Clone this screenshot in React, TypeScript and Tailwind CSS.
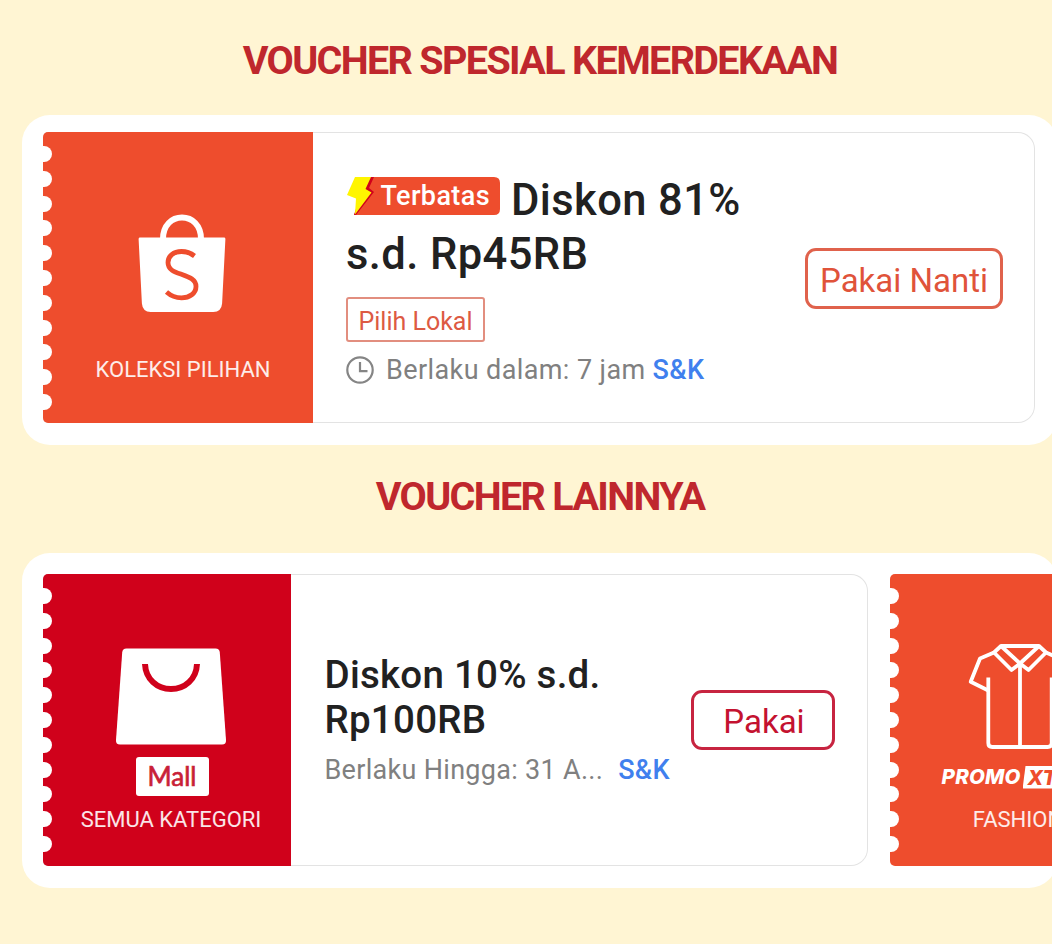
import type { ReactNode } from "react"
import { clsx } from "clsx"

interface TicketStubProps {
  className?: string
  children: ReactNode
}

function SectionTitle({ className, children }: { className?: string; children: ReactNode }) {
  return (
    <h2
      className={clsx(
        "pl-[28px] text-center text-[39.5px] leading-[48px] font-bold whitespace-nowrap text-[#bf272d]",
        className,
      )}
    >
      {children}
    </h2>
  )
}

// Coloured left side of a voucher, with the perforated edge
function TicketStub({ className, children }: TicketStubProps) {
  return (
    <div className={clsx("relative shrink-0 rounded-l-[5px] pl-[9px]", className)}>
      <div className="absolute top-[14px] -left-px flex flex-col gap-[8.8px]">
        {Array.from({ length: 11 }).map((_, i) => (
          <div key={i} className="h-4 w-[9.5px] rounded-r-full bg-white" />
        ))}
      </div>
      <div className="flex h-full flex-col items-center">{children}</div>
    </div>
  )
}

function StubLabel({ className, children }: { className?: string; children: ReactNode }) {
  return <div className={clsx("text-[22px] leading-7 whitespace-nowrap text-white/90", className)}>{children}</div>
}

function ShopeeBag() {
  return (
    <svg className="mt-[81px] mr-px h-[100px] w-[88px] shrink-0" viewBox="0 0 88 100" fill="none">
      <path d="M25 26C25 12 34 4.500 44 4.500s19 7.500 19 21.500" stroke="#fff" strokeWidth="6" />
      <path
        d="M2 24.5h84q1.500 0 1.400 1.600l-3.300 64.500q-.7 8.400-8.800 8.400H12.700q-8.100 0-8.800-8.400L.6 26.100Q.5 24.500 2 24.500Z"
        fill="#fff"
      />
      <path
        d="M56.500 43C52 39.500 47.500 38.500 43.500 38.500C35.500 38.500 30 43 30 49.500C30 57.500 38 59.500 44 61.500C51 64 58 66.500 58 73.500C58 80.500 51.500 84.800 43.500 84.800C37.500 84.800 32.500 82.500 28.500 79"
        stroke="#ee4d2d"
        strokeWidth="4.800"
      />
    </svg>
  )
}

function MallBag() {
  return (
    <svg className="mt-[74px] mr-px h-[97px] w-[112px] shrink-0" viewBox="0 0 112 97" fill="none">
      <path
        d="M11.500 .5h89q4 0 4.300 4l6.200 87.500q.3 4.500-4 4.500H5q-4.300 0-4-4.500L7.200 4.500q.3-4 4.300-4Z"
        fill="#fff"
      />
      <path d="M30 16c.6 15 12 25 26 25s25.400-10 26-25" stroke="#d0011b" strokeWidth="6" />
    </svg>
  )
}

function Shirt() {
  return (
    <svg
      className="mt-[69px] ml-[3px] h-[108px] w-[106px] shrink-0"
      viewBox="0 0 106 108"
      fill="none"
      stroke="#fff"
      strokeWidth="3.800"
      strokeLinejoin="round"
    >
      <path d="M34 3H72L79 9.500 61.500 27 53 20.500 44.500 27 27 9.500Z" />
      <path d="M34 3L53 20.500 72 3" />
      <path d="M53 20.500V104" />
      <path d="M27 9.500L13 15.500 3.700 38.700 21.300 47.500" />
      <path d="M79 9.500L93 15.500 102.300 38.700 84.700 47.500" />
      <path d="M21.300 34.500V100Q21.300 104 25.300 104H80.700Q84.700 104 84.700 100V34.500" />
    </svg>
  )
}

function LimitedBadge() {
  return (
    <span className="relative mr-[11px] inline-flex h-[38px] w-[154px] items-center justify-end rounded-r-[6px] pr-[10px] align-[10px]">
      <svg className="absolute inset-0 h-full w-full" viewBox="0 0 154 38">
        <path d="M20 0H148Q154 0 154 6V32Q154 38 148 38H8Z" fill="#ee4d2d" />
        <path d="M23 0H28L23 11 28 15 10 38H8Z" fill="#d0011b" />
        <path d="M9 0H25L19.500 12 25.500 15.500 9 37.500 10 21.500 1 18Z" fill="#fff500" />
      </svg>
      <span className="relative text-[27px] leading-[38px] font-medium tracking-[0.4px] text-white">Terbatas</span>
    </span>
  )
}

function ClockIcon() {
  return (
    <svg className="mr-3 h-7 w-7 shrink-0" viewBox="0 0 28 28" fill="none" stroke="#858585" strokeWidth="2.200">
      <circle cx="14" cy="14" r="12.700" />
      <path d="M14 6V15.200H21.500" />
    </svg>
  )
}

export default function App() {
  return (
    <div className="h-[944px] w-[1052px] overflow-hidden bg-[#fff5d3] font-[Roboto,sans-serif]">
      <SectionTitle className="pt-[37px] tracking-[-1.65px]">VOUCHER SPESIAL KEMERDEKAAN</SectionTitle>

      {/* Independence day voucher */}
      <section className="mt-[30px] ml-[22px] h-[330px] w-[1035px] rounded-[28px] bg-white pt-[17px] pl-[21px]">
        <div className="flex h-[291px] w-[992px] rounded-l-[5px] rounded-r-[17px] border border-l-0 border-[#e3e3e3]">
          <TicketStub className="-my-px w-[270px] bg-[#ee4d2d]">
            <ShopeeBag />
            <StubLabel className="mt-[43px] pl-px">KOLEKSI PILIHAN</StubLabel>
          </TicketStub>
          <div className="w-[470px] shrink-0 pt-[41px] pl-[33px]">
            <div className="text-[43.5px] leading-[54px] font-medium tracking-[0.4px] whitespace-nowrap text-[#212121]">
              <LimitedBadge />
              Diskon 81%
              <br />
              s.d. Rp45RB
            </div>
            <div className="mt-[15px] flex h-[45px] w-[139px] items-center justify-center rounded-[3px] border-2 border-[#e28e7f] pt-[4px] text-[25px] text-[#dd5a43]">
              Pilih Lokal
            </div>
            <div className="mt-3 flex h-8 items-center text-[27px] tracking-[0.4px] whitespace-nowrap text-[#808080]">
              <ClockIcon />
              Berlaku dalam: 7 jam
              <span className="ml-[7px] font-medium text-[#4080ee]">S&amp;K</span>
            </div>
          </div>
          <button className="mt-[115px] ml-[22px] h-[61px] w-[198px] shrink-0 rounded-[11px] border-3 border-[#e0624c] pt-[4px] text-[33px] text-[#e0533a]">
            Pakai Nanti
          </button>
        </div>
      </section>

      <SectionTitle className="pt-[28px] tracking-[-1.65px]">VOUCHER LAINNYA</SectionTitle>

      <section className="mt-[32px] ml-[22px] flex h-[335px] w-[1035px] gap-[22px] overflow-hidden rounded-[28px] bg-white pt-[21px] pl-[21px]">
        <div className="flex h-[292px] w-[825px] shrink-0 rounded-l-[5px] rounded-r-[17px] border border-l-0 border-[#e3e3e3]">
          <TicketStub className="-my-px w-[248px] bg-[#d0011b]">
            <MallBag />
            <div className="mt-[12px] ml-px flex h-[39px] w-[73px] shrink-0 items-center justify-center rounded-[3px] bg-white font-[Lato,sans-serif] text-[26px] text-[#c91f38] [-webkit-text-stroke:0.7px_#c91f38]">
              Mall
            </div>
            <StubLabel className="mt-[10px] pr-px">SEMUA KATEGORI</StubLabel>
          </TicketStub>
          <div className="w-[378px] shrink-0 pt-[78px] pl-[33.5px]">
            <div className="text-[38.5px] leading-[44.5px] font-medium tracking-[0.25px] whitespace-nowrap text-[#212121]">
              Diskon 10% s.d.
              <br />
              Rp100RB
            </div>
            <div className="mt-3 flex h-8 items-center text-[27px] tracking-[0.3px] whitespace-nowrap text-[#808080]">
              Berlaku Hingga: 31 A...
              <span className="ml-[15px] font-medium text-[#4080ee]">S&amp;K</span>
            </div>
          </div>
          <button className="mt-[115px] ml-[22px] h-[60px] w-[144px] shrink-0 rounded-[11px] border-3 border-[#c72440] pt-[4px] pl-[8px] pr-[6px] text-[33px] text-[#c41230]">
            Pakai
          </button>
        </div>

        <TicketStub className="h-[292px] w-[248px] bg-[#ee4d2d]">
          <Shirt />
          <div className="mt-[14px] mr-[5px] flex h-6 shrink-0 items-center font-[Inter,sans-serif] text-[20.5px] font-extrabold tracking-[0.2px] text-white italic">
            PROMO
            <span className="ml-[2px] bg-white pr-1 pl-[5px] leading-[23px] text-[#ee4d2d] [clip-path:polygon(3px_0,100%_0,100%_100%,0_100%)]">
              XTRA
            </span>
          </div>
          <StubLabel className="mt-[17px] pr-px">FASHION</StubLabel>
        </TicketStub>
      </section>
    </div>
  )
}
